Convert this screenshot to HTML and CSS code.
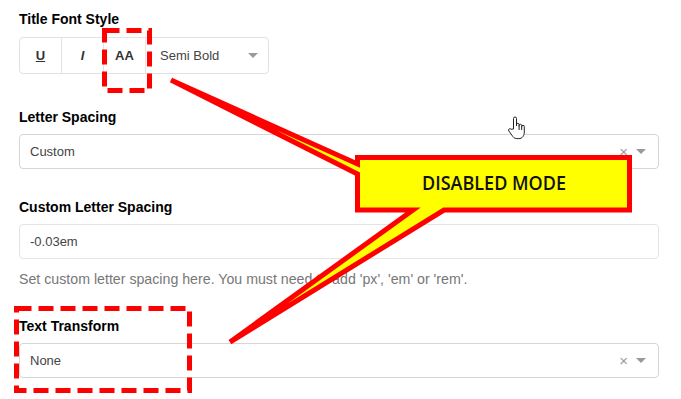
FILE: index.html
```html
<!DOCTYPE html>
<html>
<head>
<meta charset="utf-8">
<link rel="stylesheet" href="styles.css">
</head>
<body>
<div class="page">
  <div class="field field-title">
    <div class="label">Title Font Style</div>
    <div class="btn-group">
      <span class="btn btn-u">U</span>
      <span class="btn btn-i">I</span>
      <span class="btn btn-aa">AA</span>
      <span class="btn-select"><span class="sel-text">Semi Bold</span><span class="caret"></span></span>
    </div>
  </div>

  <div class="field field-ls">
    <div class="label">Letter Spacing</div>
    <div class="select">
      <span class="sel-value">Custom</span>
      <span class="clear">×</span>
      <span class="caret"></span>
    </div>
  </div>

  <div class="field field-custom">
    <div class="label">Custom Letter Spacing</div>
    <div class="input">-0.03em</div>
    <p class="help">Set custom letter spacing here. You must need to add 'px', 'em' or 'rem'.</p>
  </div>

  <div class="field field-tt">
    <div class="label">Text Transform</div>
    <div class="select">
      <span class="sel-value">None</span>
      <span class="clear">×</span>
      <span class="caret"></span>
    </div>
  </div>
</div>

<svg class="overlay" width="681" height="399" viewBox="0 0 681 399">
  <rect class="dash" x="104.5" y="30.5" width="45" height="60"/>
  <rect class="dash" x="16.5" y="308.5" width="173" height="82"/>
  <path class="callout" d="M357.5 157.5 H629.5 V210 H444 L230 342 L413 210 H357.5 V174 L171 80 L357.5 164 Z"/>
  <text class="callout-text" x="494" y="190" text-anchor="middle" textLength="144" lengthAdjust="spacingAndGlyphs">DISABLED MODE</text>
  <g class="hand" transform="translate(508 116)">
    <path d="M5.5 13 V2.5 a1.5 1.5 0 0 1 3 0 V10 V8.6 a1.3 1.3 0 0 1 2.6 0 V10.5 V9.6 a1.3 1.3 0 0 1 2.6 0 V11 V10.6 a1.3 1.3 0 0 1 2.6 0 V16 c0 3.8 -2 6.6 -5.5 6.6 h-2 c-2.5 0 -3.6 -1.5 -5 -3.5 l-3 -4.2 a1.4 1.4 0 0 1 2.3 -1.6 z"/>
    <path d="M11.1 10.5 V14 M13.7 11 V14" />
  </g>
</svg>
</body>
</html>
```

FILE: styles.css
```css
html, body {
  margin: 0;
  padding: 0;
  background: #ffffff;
}

body {
  font-family: "Liberation Sans", Arial, sans-serif;
  color: #444;
  position: relative;
  width: 681px;
  height: 399px;
  overflow: hidden;
}

.page {
  padding: 11px 22px 0 19px;
}

.label {
  font-weight: bold;
  font-size: 14px;
  line-height: 16px;
  color: #000;
}

.field-title .label {
  margin-bottom: 10px;
}

.field-ls {
  margin-top: 35px;
}

.field-custom {
  margin-top: 30px;
}

.field-tt {
  margin-top: 0;
}

.field-ls .label,
.field-custom .label,
.field-tt .label {
  margin-bottom: 9px;
}

.btn-group {
  display: flex;
  width: 250px;
  height: 37px;
  box-sizing: border-box;
  border: 1px solid #e2e2e2;
  border-radius: 4px;
}

.btn {
  width: 42px;
  box-sizing: border-box;
  border-right: 1px solid #e2e2e2;
  display: flex;
  align-items: center;
  justify-content: center;
  font-size: 13px;
  font-weight: bold;
  color: #333;
}

.btn-u {
  text-decoration: underline;
}

.btn-i {
  font-style: italic;
}

.btn-select {
  flex: 1;
  display: flex;
  align-items: center;
  padding: 0 10px 0 14px;
  font-size: 13px;
  color: #444;
}

.sel-text {
  flex: 1;
}

.caret {
  width: 0;
  height: 0;
  border-left: 5px solid transparent;
  border-right: 5px solid transparent;
  border-top: 5px solid #999;
}

.select,
.input {
  height: 35px;
  box-sizing: border-box;
  border: 1px solid #d6d6d6;
  border-radius: 4px;
  display: flex;
  align-items: center;
  padding: 0 12px 0 10px;
  font-size: 13px;
  color: #444;
}

.input {
  border-color: #e4e4e4;
}

.sel-value {
  flex: 1;
}

.clear {
  color: #999;
  font-size: 15px;
  margin-right: 8px;
}

.help {
  margin: 10px 0 29px;
  font-size: 14.2px;
  line-height: 20px;
  color: #777;
}

.overlay {
  position: absolute;
  left: 0;
  top: 0;
  pointer-events: none;
}

.dash {
  fill: none;
  stroke: #ff0000;
  stroke-width: 5;
  stroke-dasharray: 15 7;
}

.callout {
  fill: #ffff00;
  stroke: #ff0000;
  stroke-width: 5;
  stroke-linejoin: miter;
}

.callout-text {
  font-family: "Open Sans", "Noto Sans", sans-serif;
  font-weight: 600;
  font-size: 20px;
  fill: #111;
}

.hand path {
  fill: #fff;
  stroke: #222;
  stroke-width: 1;
  stroke-linejoin: round;
}
```
